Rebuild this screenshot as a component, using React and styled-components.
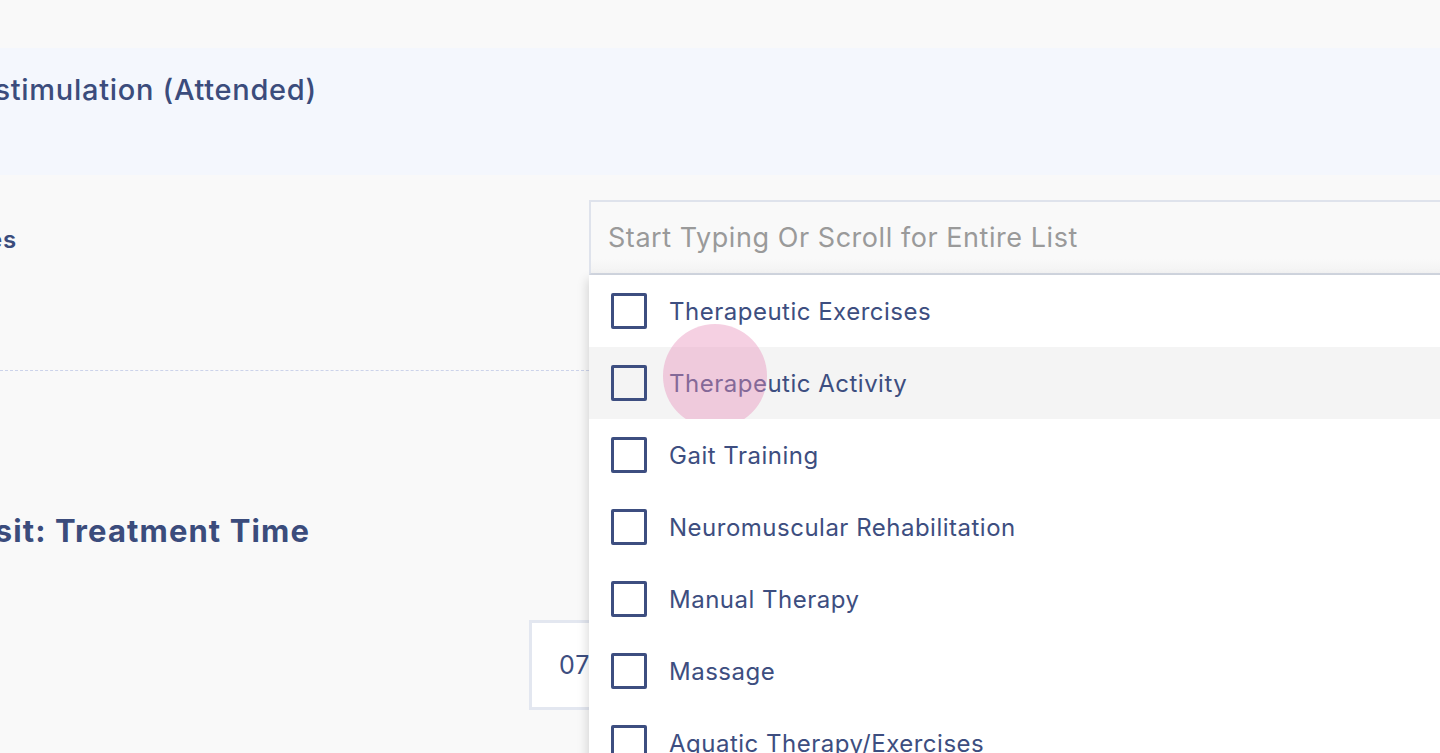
import styled, { createGlobalStyle } from "styled-components";

const GlobalStyle = createGlobalStyle`
  html, body {
    margin: 0;
    padding: 0;
    background: #f9f9f9;
    overflow: hidden;
  }
  body {
    font-family: "Inter", "Open Sans", sans-serif;
    color: #3d4e80;
  }
`;

const Page = styled.div`
  width: 1440px;
  height: 753px;
  background: #f9f9f9;
  overflow: hidden;
  padding-top: 48px;
  box-sizing: border-box;
`;

const Banner = styled.div`
  height: 127px;
  background: #f4f7fd;
  display: flex;
  align-items: flex-start;
`;

const CutText = styled.div`
  display: flex;
  justify-content: flex-end;
  width: ${(p) => p.$end}px;
  white-space: nowrap;
  flex-shrink: 0;
`;

const Title = styled.span`
  font-size: 29px;
  font-weight: 500;
  line-height: 1;
  margin-top: 27px;
  color: #3b4c7c;
  letter-spacing: 0.7px;
`;

const FieldRow = styled.div`
  display: flex;
  margin-top: 25px;
  height: 75px;
`;

const LabelCol = styled.div`
  width: 589px;
  flex-shrink: 0;
  display: flex;
  align-items: center;
  padding-top: 4px;
  box-sizing: border-box;
`;

const Label = styled.span`
  font-size: 24px;
  font-weight: 600;
  letter-spacing: 0.8px;
  color: #3b4c7c;
`;

const InputWrap = styled.div`
  position: relative;
  width: 1000px;
  flex-shrink: 0;
`;

const Input = styled.div`
  height: 75px;
  box-sizing: border-box;
  border: 2px solid #dfe3ec;
  border-bottom-color: #d3d8e2;
  background: linear-gradient(#f9f9f9 80%, #f3f3f3);
  display: flex;
  align-items: center;
  padding-left: 17px;
  font-size: 27px;
  letter-spacing: 0.55px;
  color: #9a9a9a;
`;

const Menu = styled.ul`
  position: absolute;
  top: 75px;
  left: 0;
  width: 1000px;
  margin: 0;
  padding: 0;
  list-style: none;
  background: #ffffff;
  box-shadow: -2px 4px 10px rgba(0, 0, 0, 0.14);
  z-index: 2;
`;

const Item = styled.li`
  position: relative;
  height: 72px;
  display: flex;
  align-items: center;
  padding-left: 22px;
  gap: 22px;
  background: ${(p) => (p.$hover ? "#f4f4f4" : "#ffffff")};
  font-size: 24px;
  letter-spacing: 0.5px;
  color: #3d4e80;
`;

const Box = styled.span`
  width: 36px;
  height: 36px;
  box-sizing: border-box;
  border: 3px solid #3d4e80;
  border-radius: 2px;
  flex-shrink: 0;
`;

const Ripple = styled.span`
  position: absolute;
  left: 74px;
  top: -23px;
  width: 104px;
  height: 104px;
  border-radius: 50%;
  background: rgba(232, 143, 186, 0.42);
  pointer-events: none;
`;

const Divider = styled.div`
  width: 589px;
  margin-top: 95px;
  border-top: 1px dashed #ccd3ea;
`;

const Heading = styled.span`
  font-size: 31px;
  font-weight: 700;
  line-height: 1;
  letter-spacing: 1.1px;
  color: #3b4c7c;
`;

const HeadingRow = styled.div`
  margin-top: 144px;
  display: flex;
`;

const TimeRow = styled.div`
  margin-top: 74px;
  padding-left: 529px;
  display: flex;
`;

const TimeBox = styled.div`
  width: 200px;
  height: 90px;
  box-sizing: border-box;
  border: 3px solid #e3e7f0;
  background: #ffffff;
  display: flex;
  align-items: center;
  padding-left: 27px;
  font-size: 25px;
  letter-spacing: 1px;
  color: #3d4e80;
`;

const options = [
  "Therapeutic Exercises",
  "Therapeutic Activity",
  "Gait Training",
  "Neuromuscular Rehabilitation",
  "Manual Therapy",
  "Massage",
  "Aquatic Therapy/Exercises",
];

export default function App() {
  return (
    <Page>
      <GlobalStyle />
      <Banner>
        <CutText $end={317}>
          <Title>Electrical stimulation (Attended)</Title>
        </CutText>
      </Banner>
      <FieldRow>
        <LabelCol>
          <CutText $end={17}>
            <Label>Treatment Procedures</Label>
          </CutText>
        </LabelCol>
        <InputWrap>
          <Input>Start Typing Or Scroll for Entire List</Input>
          <Menu>
            {options.map((o, i) => (
              <Item key={o} $hover={i === 1}>
                <Box />
                {o}
                {i === 1 && <Ripple />}
              </Item>
            ))}
          </Menu>
        </InputWrap>
      </FieldRow>
      <Divider />
      <HeadingRow>
        <CutText $end={310}>
          <Heading>Today's Visit: Treatment Time</Heading>
        </CutText>
      </HeadingRow>
      <TimeRow>
        <TimeBox>07:00</TimeBox>
      </TimeRow>
    </Page>
  );
}
